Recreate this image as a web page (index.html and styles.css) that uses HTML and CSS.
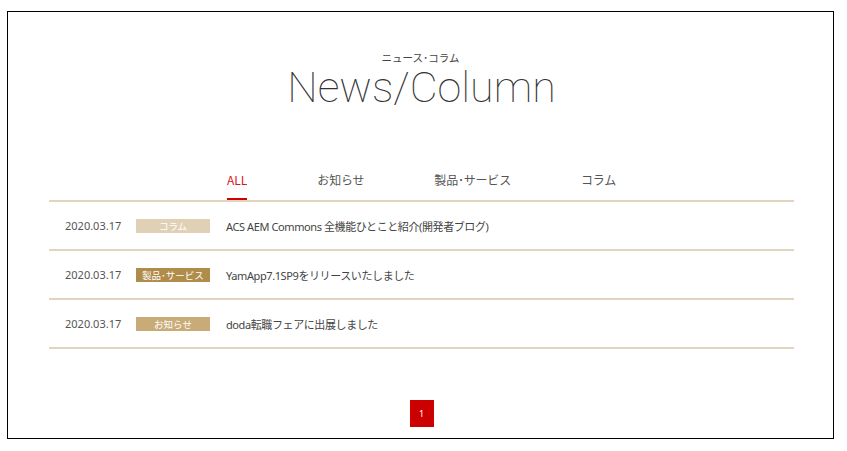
FILE: index.html
```html
<!DOCTYPE html>
<html lang="ja">
<head>
<meta charset="utf-8">
<title>News/Column</title>
<link rel="stylesheet" href="styles.css">
</head>
<body>
<div class="frame">
  <header class="head">
    <p class="sub">ニュース･コラム</p>
    <h1 class="title">News/Column</h1>
  </header>
  <nav class="tabs">
    <a class="tab active">ALL</a>
    <a class="tab">お知らせ</a>
    <a class="tab">製品･サービス</a>
    <a class="tab">コラム</a>
  </nav>
  <ul class="list">
    <li class="row">
      <span class="date">2020.03.17</span>
      <span class="badge b-column">コラム</span>
      <span class="text">ACS AEM Commons 全機能ひとこと紹介(開発者ブログ)</span>
    </li>
    <li class="row">
      <span class="date">2020.03.17</span>
      <span class="badge b-product">製品･サービス</span>
      <span class="text">YamApp7.1SP9をリリースいたしました</span>
    </li>
    <li class="row">
      <span class="date">2020.03.17</span>
      <span class="badge b-news">お知らせ</span>
      <span class="text">doda転職フェアに出展しました</span>
    </li>
  </ul>
  <div class="pager"><span class="page">1</span></div>
</div>
</body>
</html>
```
FILE: styles.css
```css
html, body {
  margin: 0;
  padding: 0;
  background: #fff;
}
body {
  font-family: "Noto Sans", "Noto Sans CJK JP", sans-serif;
  color: #444;
}
.frame {
  box-sizing: border-box;
  margin: 11px 0 0 7px;
  width: 827px;
  height: 428px;
  border: 1px solid #000;
  padding-top: 40px;
}
.head {
  text-align: center;
}
.sub {
  margin: 0 0 2px;
  font-size: 10.5px;
  line-height: 12px;
  color: #444;
  font-family: "Noto Sans CJK JP", sans-serif;
}
.title {
  margin: 0;
  font-family: Roboto, sans-serif;
  font-weight: 100;
  font-size: 43px;
  line-height: 43px;
  color: #333;
  padding-left: 2px;
}
.tabs {
  display: flex;
  justify-content: center;
  gap: 70px;
  margin-top: 61px;
  padding-left: 2px;
}
.tab {
  font-family: "Noto Sans CJK JP", sans-serif;
  font-size: 12px;
  letter-spacing: -0.2px;
  line-height: 20px;
  color: #555;
  padding-bottom: 8px;
  border-bottom: 2px solid transparent;
}
.tab.active {
  color: #d8141c;
  border-bottom-color: #d00000;
  letter-spacing: 0;
}
.list {
  list-style: none;
  margin: 0 0 0 41px;
  padding: 0;
  width: 745px;
  border-top: 2px solid #e2d5bf;
}
.row {
  display: flex;
  align-items: center;
  height: 47px;
  border-bottom: 2px solid #e2d5bf;
  padding-left: 16px;
  font-family: "Noto Sans", "Noto Sans CJK JP", sans-serif;
  font-size: 11px;
}
.date {
  width: 71px;
  color: #555;
}
.badge {
  width: 74px;
  height: 14px;
  line-height: 14px;
  text-align: center;
  font-size: 9.5px;
  color: #fff;
  font-family: "Noto Sans CJK JP", sans-serif;
  margin-right: 16px;
}
.b-column { background: #e0d1b6; }
.b-product { background: #b08c4b; }
.b-news { background: #c9ab77; }
.text {
  color: #444;
  font-family: "Noto Sans", "Noto Sans CJK JP", sans-serif;
  font-size: 11px;
  letter-spacing: -0.4px;
}
.pager {
  display: flex;
  justify-content: center;
  margin-top: 51px;
  padding-left: 2px;
}
.page {
  width: 24px;
  height: 27px;
  line-height: 27px;
  text-align: center;
  background: #cc0000;
  color: #fff;
  font-size: 9px;
  font-family: "Noto Sans", sans-serif;
}
```
